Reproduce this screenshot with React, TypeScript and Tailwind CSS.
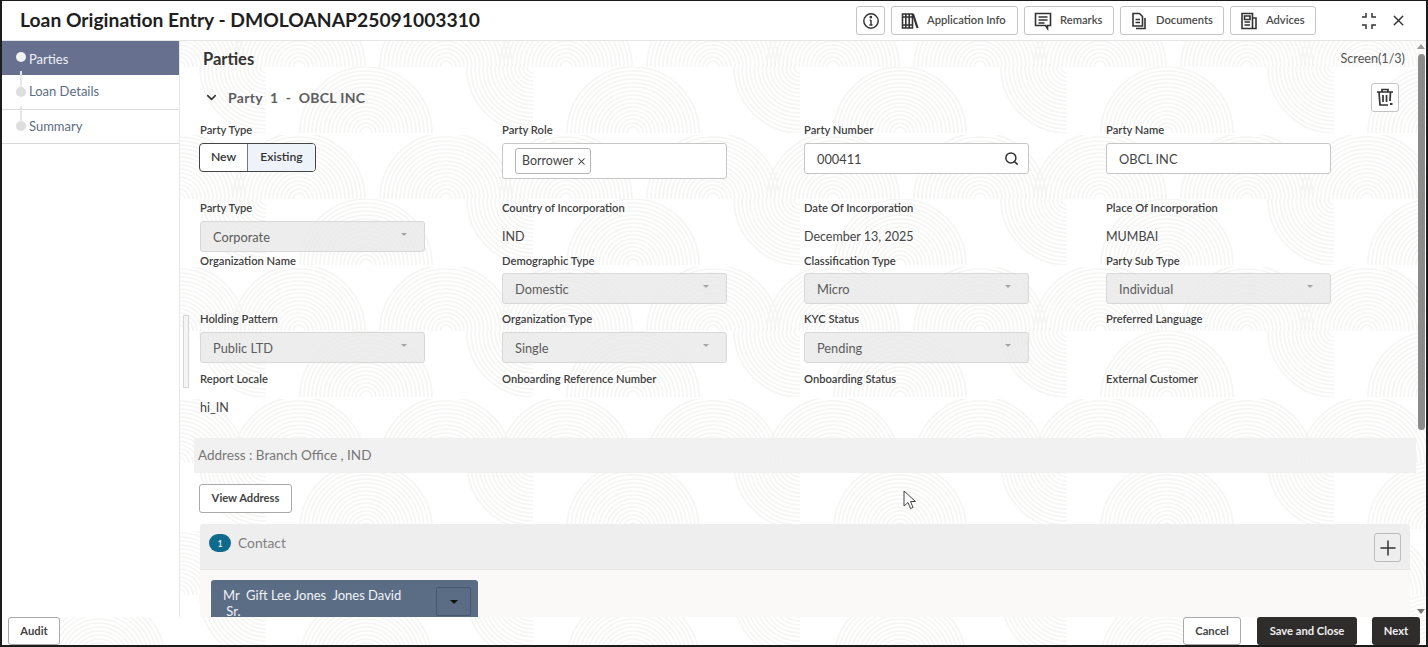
import React from "react";
import { ChevronDown, Search, X, Plus } from "lucide-react";

const FONT = { fontFamily: 'Lato, "Noto Sans", sans-serif' };

const RINGS = Array.from({ length: 16 }, (_, i) => 6 + i * 4);

function Rings({ cx, cy }: { cx: number; cy: number }) {
  return (
    <>
      {RINGS.map((r) => (
        <circle key={r} cx={cx} cy={cy} r={r} fill="none" stroke="#f5f5f4" strokeWidth="1.7" />
      ))}
    </>
  );
}

function Pattern() {
  return (
    <svg className="absolute inset-0 w-full h-full" aria-hidden="true">
      <defs>
        <pattern id="arcs" width="267" height="132" patternUnits="userSpaceOnUse" x="97" y="66">
          <svg x="0" y="0" width="267" height="66">
            <Rings cx={0} cy={66} />
            <Rings cx={267} cy={66} />
          </svg>
          <svg x="100" y="0" width="67" height="66">
            <Rings cx={67} cy={0} />
          </svg>
          <svg x="0" y="68" width="267" height="64">
            <Rings cx={80} cy={64} />
            <Rings cx={200} cy={64} />
          </svg>
        </pattern>
      </defs>
      <rect width="100%" height="100%" fill="#fff" />
      <rect width="100%" height="100%" fill="url(#arcs)" />
    </svg>
  );
}

function HBtn({ w, icon, label }: { w: string; icon: React.ReactNode; label: string }) {
  return (
    <button className={`${w} h-[29px] flex items-center pl-[8px] gap-[7px] border border-[#c4c4c4] rounded-[3px] bg-white text-[11.2px] font-semibold text-[#4a4a4a]`}>
      <span className="w-[20px] flex justify-center text-[#333]">{icon}</span>
      {label}
    </button>
  );
}

const iconProps = {
  width: 20,
  height: 20,
  viewBox: "0 0 20 20",
  fill: "none",
  stroke: "currentColor",
  strokeWidth: 1.6,
};

const BooksIcon = () => (
  <svg {...iconProps}>
    <path d="M2.5 3h10v14h-10zM2.5 6h10M2.5 14h10M5.8 3v14M9.2 3v14" />
    <path d="M13 3l4.5 14" strokeWidth="2.2" />
  </svg>
);
const RemarksIcon = () => (
  <svg {...iconProps}>
    <path d="M2.5 2.5h15v12h-3v3l-2-3h-10zM5.5 6h9M5.5 9h9M5.5 12h6" />
  </svg>
);
const DocsIcon = () => (
  <svg {...iconProps}>
    <path d="M4 2.5h6.5l3 3v9.5H4zM6.5 8.5h4.5M6.5 11.5h4.5M16 7v10.5H7" />
  </svg>
);
const AdvicesIcon = () => (
  <svg {...iconProps}>
    <path d="M3 2.5h10.5v15H3zM13.5 7H17v10.5h-3.5M5.5 5h5.5v3.5H5.5zM5.5 11h5.5M5.5 14h5.5" />
  </svg>
);
const InfoIcon = () => (
  <svg {...iconProps} width={18} height={18}>
    <circle cx="10" cy="10" r="8" />
    <path d="M10 9v5.5M8.3 14.5h3.4M8.5 9H10" />
    <circle cx="9.8" cy="5.8" r="0.7" fill="currentColor" />
  </svg>
);
const CompressIcon = () => (
  <svg width="16" height="16" viewBox="0 0 16 16" fill="none" stroke="#333" strokeWidth="1.5">
    <path d="M5 0v4H1M11 0v4h4M5 16v-4H1M11 16v-4h4" />
  </svg>
);
const TrashIcon = () => (
  <svg width="20" height="20" viewBox="0 0 20 20" fill="none" stroke="#333" strokeWidth="1.7">
    <path d="M2 5h16M7 5V2.5h6V5M4 5l1 13h8M15.5 5l-.5 9M8 8v7M11.5 8v7" />
    <path d="M15 16h2.5v2H15z" fill="#333" strokeWidth="0" />
  </svg>
);

function Label({ children }: { children: React.ReactNode }) {
  return <div className="text-[11.2px] leading-[14px] font-semibold text-[#404040]">{children}</div>;
}

function Select({ value }: { value: string }) {
  return (
    <div className="w-[225px] h-[31px] flex items-center justify-between pl-[12px] pr-[17px] bg-[#e8e8e8]/80 border border-[#d8d8d8] rounded-[3px] text-[12.8px] text-[#5c5c5c]">
      <span className="pt-[2px]">{value}</span>
      <span className="w-0 h-0 mb-[5px] border-x-[3.5px] border-x-transparent border-t-[3.5px] border-t-[#a5a5a5]" />
    </div>
  );
}

function Input({ value, icon }: { value: string; icon?: boolean }) {
  return (
    <div className="w-[225px] h-[31px] flex items-center justify-between pl-[12px] pr-[9px] bg-white border border-[#c6c6c6] rounded-[3px] text-[12.8px] text-[#444]">
      <span className="pt-[2px]">{value}</span>
      {icon && <Search size={15} strokeWidth={2.4} className="text-[#333]" />}
    </div>
  );
}

function Text({ value }: { value: string }) {
  return <div className="mt-[13px] text-[12.5px] leading-[18px] text-[#444]">{value}</div>;
}

function Field({ label, children, gap = "mt-[6px]" }: { label: string; children?: React.ReactNode; gap?: string }) {
  return (
    <div className="flex flex-col">
      <Label>{label}</Label>
      <div className={gap}>{children}</div>
    </div>
  );
}

function SideItem({ label, h, dot, active, first }: { label: string; h: string; dot: string; active?: boolean; first?: boolean }) {
  return (
    <div className={`relative ${h} flex items-center pl-[27px] text-[13px] ${active ? "bg-[#67718f] text-[#eef0f4] pt-[3px]" : "bg-white text-[#5d6d80] border-b border-[#d9d9d9]"}`}>
      <span className={`absolute left-[14px] ${dot} w-[10px] h-[10px] rounded-full ${active ? "bg-[#f2f2f2]" : "bg-[#dedede]"}`} />
      {!first && <span className="absolute left-[18px] top-[-4px] w-[2px] h-[16px] bg-[#e6e6e6]" />}
      {label}
    </div>
  );
}

export default function App() {
  return (
    <div style={FONT} className="relative w-[1428px] h-[647px] overflow-hidden border-t-[1px] border-l-[2px] border-r-[2px] border-b-[2px] border-[#1c1c1c] flex flex-col">
      <Pattern />

      <header className="relative h-[40px] shrink-0 flex items-center bg-white border-b border-[#e6e6e6] pl-[18px]">
        <h1 className="text-[19.3px] font-bold text-[#1f1f1f] whitespace-nowrap -mt-[1px]">Loan Origination Entry - DMOLOANAP25091003310</h1>
        <div className="ml-auto flex items-center gap-[6px]">
          <button className="w-[29px] h-[29px] flex items-center justify-center border border-[#c4c4c4] rounded-[3px] text-[#333]">
            <InfoIcon />
          </button>
          <HBtn w="w-[127px]" icon={<BooksIcon />} label="Application Info" />
          <HBtn w="w-[90px]" icon={<RemarksIcon />} label="Remarks" />
          <HBtn w="w-[104px]" icon={<DocsIcon />} label="Documents" />
          <HBtn w="w-[86px]" icon={<AdvicesIcon />} label="Advices" />
        </div>
        <div className="ml-[45px] mr-[19px] flex items-center gap-[13px]">
          <CompressIcon />
          <X size={17} strokeWidth={2} className="text-[#333]" />
        </div>
      </header>

      <div className="relative flex-1 flex min-h-0">
        <aside className="w-[178px] shrink-0 bg-white border-r border-[#e8e8e8]">
          <SideItem label="Parties" h="h-[34px]" dot="top-[11px]" active first />
          <SideItem label="Loan Details" h="h-[35px]" dot="top-[12px]" />
          <SideItem label="Summary" h="h-[34px]" dot="top-[11px]" />
        </aside>

        <span className="absolute left-[181px] top-[274px] w-[6px] h-[73px] border border-[#d6d6d6] bg-[#f5f5f5]" />

        <main className="flex-1 min-w-0 overflow-hidden pl-[14px]">
          <div className="h-[36px] flex items-center justify-between pl-[9px] pr-[11px]">
            <h2 className="text-[16.5px] font-bold text-[#333]">Parties</h2>
            <span className="text-[12.6px] text-[#555]">Screen(1/3)</span>
          </div>
          <div className="h-[40px] mb-[6px] flex items-center justify-between pl-[10px] pr-[17px]">
            <div className="flex items-center gap-[9px] text-[14px] font-bold text-[#5e5e5e] tracking-[0.3px] whitespace-pre">
              <ChevronDown size={15} strokeWidth={2.5} className="text-[#333]" />
              <span>Party  1  -  OBCL INC</span>
            </div>
            <button className="w-[28px] h-[29px] flex items-center justify-center bg-white border border-[#c4c4c4] rounded-[3px]">
              <TrashIcon />
            </button>
          </div>

          <div className="ml-[6px] grid grid-cols-[repeat(4,302px)] grid-rows-[78px_53px_58px_60px_66px]">
            <Field label="Party Type">
              <div className="-ml-[1px] w-[117px] h-[29px] flex border border-[#444] rounded-[4px] overflow-hidden text-[12.2px] font-semibold text-[#333] bg-white">
                <span className="w-[48px] flex items-center justify-center border-r border-[#777]">New</span>
                <span className="flex-1 flex items-center justify-center bg-[#eef3f9]">Existing</span>
              </div>
            </Field>
            <Field label="Party Role">
              <div className="w-[225px] h-[36px] flex items-center pl-[12px] bg-white border border-[#c6c6c6] rounded-[3px]">
                <span className="h-[26px] flex items-center gap-[3px] pl-[6px] pr-[3px] border border-[#b5b5b5] rounded-[3px] text-[12.4px] text-[#444]">
                  Borrower <X size={11} strokeWidth={2.2} className="text-[#333]" />
                </span>
              </div>
            </Field>
            <Field label="Party Number"><Input value="000411" icon /></Field>
            <Field label="Party Name"><Input value="OBCL INC" /></Field>

            <Field label="Party Type"><Select value="Corporate" /></Field>
            <Field label="Country of Incorporation" gap="mt-0"><Text value="IND" /></Field>
            <Field label="Date Of Incorporation" gap="mt-0"><Text value="December 13, 2025" /></Field>
            <Field label="Place Of Incorporation" gap="mt-0"><Text value="MUMBAI" /></Field>

            <Field label="Organization Name" />
            <Field label="Demographic Type" gap="mt-[5px]"><Select value="Domestic" /></Field>
            <Field label="Classification Type" gap="mt-[5px]"><Select value="Micro" /></Field>
            <Field label="Party Sub Type" gap="mt-[5px]"><Select value="Individual" /></Field>

            <Field label="Holding Pattern"><Select value="Public LTD" /></Field>
            <Field label="Organization Type"><Select value="Single" /></Field>
            <Field label="KYC Status"><Select value="Pending" /></Field>
            <Field label="Preferred Language" />

            <Field label="Report Locale" gap="mt-0"><Text value="hi_IN" /></Field>
            <Field label="Onboarding Reference Number" />
            <Field label="Onboarding Status" />
            <Field label="External Customer" />
          </div>

          <div className="h-[35px] flex items-center pl-[4px] bg-[#f0f0f0]/90 text-[13.5px] text-[#777]">Address : Branch Office , IND</div>

          <button className="ml-[5px] mt-[11px] w-[93px] h-[29px] flex items-center justify-center bg-white border border-[#aaa] rounded-[3px] text-[11.2px] font-bold text-[#444]">View Address</button>

          <section className="ml-[6px] mt-[11px] w-[1210px] rounded-t-[3px] overflow-hidden">
            <div className="h-[46px] flex items-start justify-between bg-[#eeeeee] border-b border-[#e6e6e6] pl-[9px] pr-[9px]">
              <div className="flex items-center gap-[7px] mt-[9px] text-[13.8px] text-[#808080]">
                <span className="w-[22px] h-[18px] rounded-full bg-[#0f6a8b] text-white text-[9px] flex items-center justify-center">1</span>
                Contact
              </div>
              <button className="mt-[9px] w-[27px] h-[29px] flex items-center justify-center border border-[#bbb] rounded-[3px]">
                <Plus size={24} strokeWidth={1.5} className="text-[#333]" />
              </button>
            </div>
            <div className="h-[47px] overflow-hidden bg-[#faf9f7] pl-[11px] pt-[10px]">
              <div className="w-[267px] h-[60px] flex items-start justify-between bg-[#5b6d85] rounded-t-[3px] pl-[12px] pr-[7px] pt-[7px]">
                <span className="w-[190px] text-[13px] leading-[16px] text-[#f1f3f5] whitespace-pre-wrap">{"Mr  Gift Lee Jones  Jones David\n Sr."}</span>
                <span className="w-[35px] h-[29px] flex items-center justify-center border border-[#46566b] rounded-[2px]">
                  <span className="w-0 h-0 border-x-[4.5px] border-x-transparent border-t-[4px] border-t-[#111]" />
                </span>
              </div>
            </div>
          </section>
        </main>

        <div className="relative w-[10px] shrink-0 flex flex-col items-center py-[3px]">
          <span className="w-0 h-0 border-x-[4px] border-x-transparent border-b-[5px] border-b-[#9a9a9a]" />
          <span className="mt-[5px] w-[7px] h-[376px] rounded-full bg-[#8b8b8b]" />
          <span className="mt-auto w-0 h-0 border-x-[4px] border-x-transparent border-t-[5px] border-t-[#777]" />
        </div>
      </div>

      <footer className="relative h-[28px] shrink-0 flex items-start pl-[6px] pr-[6px]">
        <button className="w-[52px] h-[28px] bg-white border border-[#aaa] rounded-[3px] text-[11.2px] font-bold text-[#444]">Audit</button>
        <button className="ml-auto w-[58px] h-[28px] bg-white border border-[#aaa] rounded-[3px] text-[11.2px] font-bold text-[#444]">Cancel</button>
        <button className="ml-[16px] w-[100px] h-[28px] bg-[#2f2d2b] rounded-[3px] text-[11.2px] font-bold text-[#f0f0f0]">Save and Close</button>
        <button className="ml-[15px] w-[48px] h-[28px] bg-[#2f2d2b] rounded-[3px] text-[11.2px] font-bold text-[#f0f0f0]">Next</button>
      </footer>

      <svg className="absolute left-[901px] top-[489px]" width="16" height="22" viewBox="0 0 16 22" fill="#fff" stroke="#444" strokeWidth="1">
        <path d="M1 1v15l4-3.5 2.5 6 2.5-1-2.5-6h5z" />
      </svg>
    </div>
  );
}
